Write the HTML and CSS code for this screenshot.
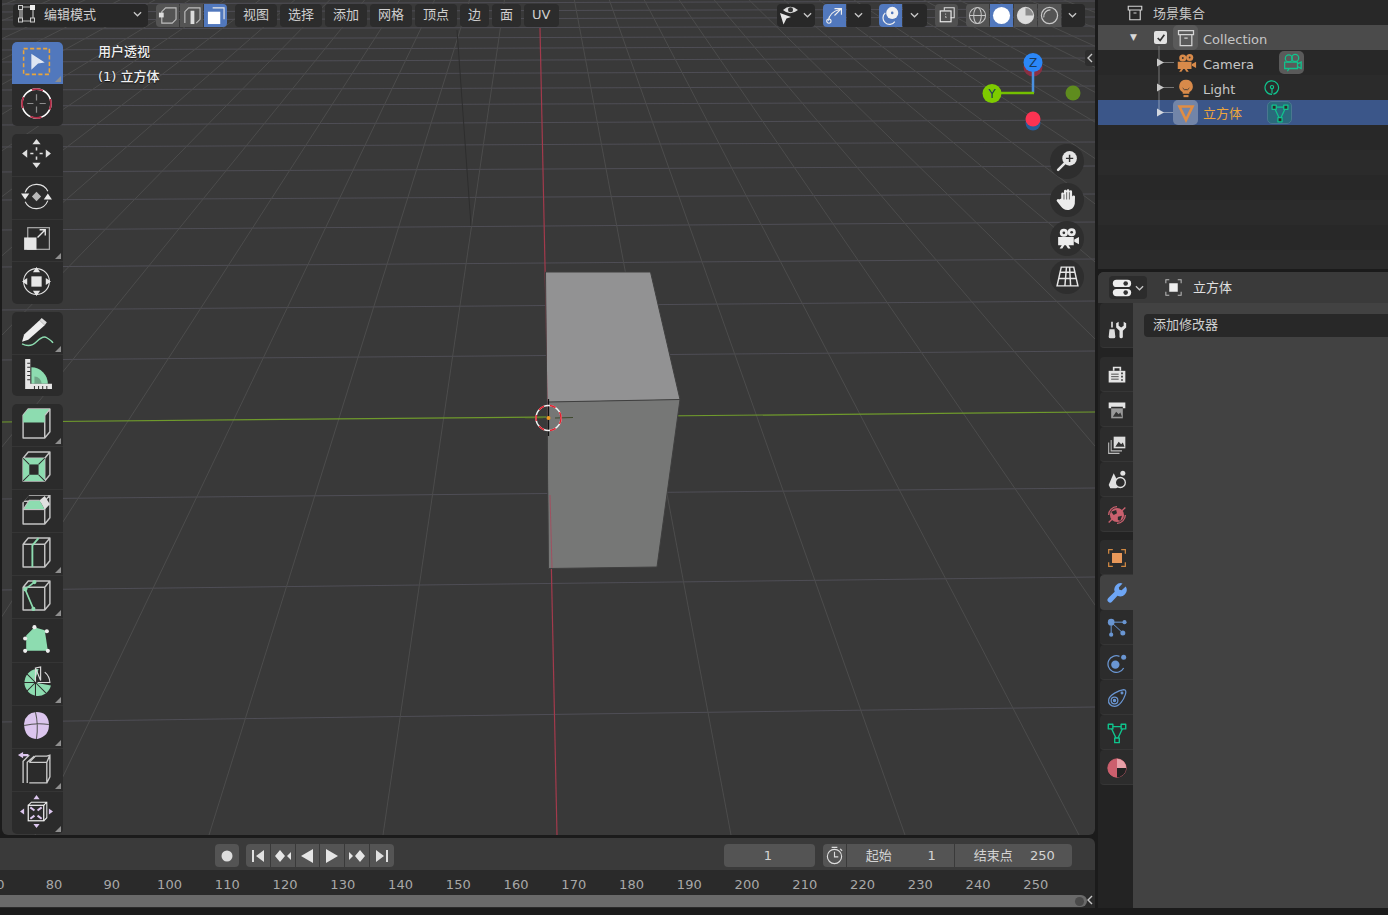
FILE: index.html
```html
<!DOCTYPE html>
<html lang="zh">
<head>
<meta charset="utf-8">
<title>Blender</title>
<link rel="stylesheet" href="styles.css">
</head>
<body>
<svg class="defs" width="0" height="0">
  <defs>
    <g id="cube" fill="none" stroke="#c4c4c4" stroke-width="1.400" stroke-linejoin="round">
      <path d="M3 8h21v22H3zM3 8l5-6h21v22l-5 6M24 8l5-6"/>
    </g>
    <g id="cam">
      <circle cx="8.500" cy="6.500" r="3.900"/><circle cx="16" cy="6" r="3.900"/>
      <path d="M3 10.500h15v8H13l2 3h-2.500l-2-3H9l-2 3H4.500l2-3H3zM18.500 13l4.500-2.500v7L18.500 15z"/>
    </g>
    <g id="boxicon" fill="none" stroke="currentColor" stroke-width="1.500">
      <path d="M3 3h18v5H3zM5 8v13h14V8M10 12h4"/>
    </g>
    <g id="tri-mesh" fill="none" stroke="#10c48d" stroke-width="1.500" stroke-linejoin="round">
      <path d="M5 5h14L12 20z"/>
      <rect x="2.500" y="2.500" width="5" height="5" fill="#2c2c2c"/><rect x="16.500" y="2.500" width="5" height="5" fill="#2c2c2c"/><rect x="9.500" y="17.500" width="5" height="5" fill="#2c2c2c"/>
    </g>
  </defs>
</svg>
<div class="app">
  <div class="left">
    <main class="viewport">
      <svg class="scene" viewBox="2 0 1093 835" width="1093" height="835">
        <path class="grid-h" d="M0 722L1095 707M0 590L1095 577M0 499L1095 488M0 360L1095 351M0 310L1095 301M0 267L1095 259M0 230L1095 222M0 200L1095 194M0 172L1095 166M0 147L1095 142M0 125L1095 120M0 106L1095 102M0 90L1095 86M0 75L1095 71M0 62L1095 58M0 50L1095 46M0 39L1095 36M0 29L1095 26M0 20L1095 17M0 12L1095 9M0 4L1095 1"/>
        <path class="grid-v" d="M535 -210L-2053 835M535 -210L-1879 835M535 -210L-1705 835M535 -210L-1531 835M535 -210L-1357 835M535 -210L-1183 835M535 -210L-1009 835M535 -210L-835 835M535 -210L-661 835M535 -210L-487 835M535 -210L-313 835M535 -210L-139 835M535 -210L35 835M535 -210L209 835M535 -210L383 835M535 -210L731 835M535 -210L905 835M535 -210L1079 835M535 -210L1253 835M535 -210L1427 835M535 -210L1601 835M535 -210L1775 835M535 -210L1949 835M535 -210L2123 835M535 -210L2297 835M535 -210L2471 835M535 -210L2645 835M535 -210L2819 835M535 -210L2993 835M535 -210L3167 835M535 -210L3341 835"/>
        <path class="grid-dark" d="M457 30L471 226"/>
        <path class="axis-y" d="M0 422L1095 412"/>
        <path class="axis-x" d="M540 28L557 835"/>
        <polygon class="cube-top" points="545.500,272 650.500,272 680,399.500 547.500,402"/>
        <polygon class="cube-front" points="547.500,402 680,399.500 657,567 548.500,568.500"/>
        <path class="cube-edge" d="M545.500 272H650.500L680 399.500L657 567L548.500 568.500L545.500 272M547.500 402L680 399.500"/>
        <path class="axis-x-faint" d="M550 495L552 568"/>
        <path class="axis-y-dark" d="M525 418.500H543M555 418L573 417.500"/>
        <path class="cursor-cross" d="M548.500 399V436"/>
        <circle class="cursor-w" cx="548.500" cy="418" r="12.500"/>
        <circle class="cursor-r" cx="548.500" cy="418" r="12.500"/>
        <circle class="cursor-dot" cx="548.500" cy="418" r="2"/>
        <circle cx="1033" cy="67" r="9.500" fill="#8a2f42"/>
        <path d="M1033 70V93" stroke="#4a90e0" stroke-width="2.500"/>
        <path d="M1000 93H1034" stroke="#74bf00" stroke-width="2.500"/>
        <circle cx="1033" cy="62.500" r="9.500" fill="#2b87f8"/>
        <circle cx="992" cy="93.500" r="9.500" fill="#7ecb00"/>
        <circle cx="1073" cy="93" r="7.500" fill="#5f8c1e"/>
        <circle cx="1033" cy="123" r="7.500" fill="#275d97"/>
        <circle cx="1033" cy="119" r="7.500" fill="#fc3352"/>
        <text class="axis-label" x="1033" y="67">Z</text>
        <text class="axis-label" x="992" y="98">Y</text>
      </svg>

      <header class="vp-head">
        <div class="mode-select">
          <svg class="ico20" viewBox="0 0 20 20"><path d="M5 3H16V17H5zM3 5V15" fill="none" stroke="#bbb" stroke-width="1.200"/><rect x="1.500" y="1.500" width="4" height="4" fill="#333" stroke="#ccc"/><rect x="13" y="1" width="5" height="5" fill="#eee"/><rect x="1.500" y="14" width="4" height="4" fill="#333" stroke="#ccc"/><rect x="13.500" y="14" width="4" height="4" fill="#333" stroke="#ccc"/></svg>
          <span class="mode-label">编辑模式</span>
          <svg class="chev" viewBox="0 0 10 6"><path d="M1 1l4 4 4-4"/></svg>
        </div>
        <div class="seg sel-modes">
          <button class="seg-btn"><svg class="ico20" viewBox="0 0 20 20"><path d="M4 6L8 2H19V14L15 18H4z" fill="none" stroke="#bdbdbd" stroke-width="1.200"/><rect x="1" y="7" width="5" height="5" fill="#ddd"/></svg></button>
          <button class="seg-btn"><svg class="ico20" viewBox="0 0 20 20"><path d="M3 18V6L7 2H19V14L15 18" fill="none" stroke="#bdbdbd" stroke-width="1.200"/><rect x="9" y="5" width="4" height="14" fill="#ddd"/></svg></button>
          <button class="seg-btn on"><svg class="ico20" viewBox="0 0 20 20"><path d="M7 2H19V14" fill="none" stroke="#e8e8e8" stroke-width="1.200"/><rect x="2" y="6" width="13" height="13" fill="#fff"/></svg></button>
        </div>
        <nav class="menus">
          <span class="menu">视图</span><span class="menu">选择</span><span class="menu">添加</span><span class="menu">网格</span><span class="menu">顶点</span><span class="menu">边</span><span class="menu">面</span><span class="menu">UV</span>
        </nav>
        <div class="head-right">
          <div class="dd eye">
            <svg class="ico22" viewBox="0 0 22 22"><path d="M5 6q7-6.500 15 0q-8 6.500-15 0z" fill="#ddd"/><circle cx="12.500" cy="5.800" r="2.500" fill="#333"/><path d="M2 9l11 4-4.500 1.500-3 6z" fill="#e6e6e6"/></svg>
            <svg class="chev" viewBox="0 0 10 6"><path d="M1 1l4 4 4-4"/></svg>
          </div>
          <div class="seg split">
            <button class="seg-btn on"><svg class="ico20" viewBox="0 0 22 22"><path d="M4 17Q5 7 17 4M11 3h8v7M19 3l-8 8" fill="none" stroke="#eee" stroke-width="1.300"/><circle cx="4.500" cy="17.500" r="2.500" fill="none" stroke="#eee" stroke-width="1.300"/></svg></button>
            <span class="dd-tail"><svg class="chev" viewBox="0 0 10 6"><path d="M1 1l4 4 4-4"/></svg></span>
          </div>
          <div class="seg split">
            <button class="seg-btn on"><svg class="ico20" viewBox="0 0 22 22"><circle cx="13" cy="8" r="7" fill="#f2f2f2"/><circle cx="13" cy="8" r="1.500" fill="#5178bd"/><path d="M5 8a7.500 7.500 0 1 0 11 10" fill="none" stroke="#eee" stroke-width="1.400"/></svg></button>
            <span class="dd-tail"><svg class="chev" viewBox="0 0 10 6"><path d="M1 1l4 4 4-4"/></svg></span>
          </div>
          <button class="solo"><svg class="ico20" viewBox="0 0 20 20"><path d="M7 5V2H18V13H14" fill="none" stroke="#ddd" stroke-width="1.200"/><rect x="2.500" y="5.500" width="12" height="12" fill="none" stroke="#eee" stroke-width="1.300"/><path d="M8 9h1M8 12h1v1" stroke="#eee" fill="none"/></svg></button>
          <div class="seg shading">
            <button class="seg-btn"><svg class="ico20" viewBox="0 0 20 20" fill="none" stroke="#c6c6c6" stroke-width="1.100"><circle cx="10" cy="10" r="8.500"/><ellipse cx="10" cy="10" rx="4" ry="8.500"/><path d="M1.500 10h17"/></svg></button>
            <button class="seg-btn on"><svg class="ico20" viewBox="0 0 20 20"><circle cx="10" cy="10" r="9" fill="#fff"/></svg></button>
            <button class="seg-btn"><svg class="ico20" viewBox="0 0 20 20"><circle cx="10" cy="10" r="8.500" fill="#8c8c8c" stroke="#d0d0d0" stroke-width="1.200"/><path d="M10 1.500A8.500 8.500 0 0 0 10 18.500A8.500 8.500 0 0 0 18.500 10H10z" fill="#dcdcdc"/></svg></button>
            <button class="seg-btn"><svg class="ico20" viewBox="0 0 20 20" fill="none" stroke="#c6c6c6" stroke-width="1.300"><circle cx="10" cy="10" r="8.500"/><path d="M4 12a7 7 0 0 1 7-8"/></svg></button>
            <span class="dd-tail"><svg class="chev" viewBox="0 0 10 6"><path d="M1 1l4 4 4-4"/></svg></span>
          </div>
        </div>
      </header>

      <div class="view-text">
        <div>用户透视</div>
        <div>(1) 立方体</div>
      </div>

      <aside class="toolbar">
        <div class="tool-group g1">
          <button class="tool active more"><svg class="ico30" viewBox="0 0 32 32"><rect x="3.500" y="3.500" width="25" height="25" fill="none" stroke="#e9a53c" stroke-width="1.500" stroke-dasharray="4 2.300"/><path d="M11 8.500L24 17l-6.500 1L11 24z" fill="#dfe6f2"/></svg></button>
          <button class="tool"><svg class="ico30" viewBox="0 0 32 32"><circle cx="16" cy="16" r="14" fill="none" stroke="#fff" stroke-width="1.600"/><circle cx="16" cy="16" r="14" fill="none" stroke="#b12a45" stroke-width="1.700" stroke-dasharray="11 11" stroke-dashoffset="5"/><path d="M16 7v6M16 19v6M7 16h6M19 16h6" stroke="#8d8d8d" stroke-width="1.200"/></svg></button>
        </div>
        <div class="tool-group g2">
          <button class="tool"><svg class="ico30" viewBox="0 0 32 32" fill="#e0e0e0"><path d="M16 2l4 5h-8zM16 30l-4-5h8zM2 16l5-4v8zM30 16l-5 4v-8z"/><path d="M16 10v3M16 19v3M10 16h3M19 16h3" stroke="#e0e0e0" stroke-width="1.500"/></svg></button>
          <button class="tool"><svg class="ico30" viewBox="0 0 32 32"><path d="M5 12a12 12 0 0 1 22-1M27 20a12 12 0 0 1-22 1" fill="none" stroke="#e0e0e0" stroke-width="1.100"/><path d="M1 13h8l-4 6zM23 19h8l-4-6z" fill="#e8e8e8"/><path d="M16 11.500l4.500 4.500-4.500 4.500-4.500-4.500z" fill="#b8b8b8"/></svg></button>
          <button class="tool more"><svg class="ico30" viewBox="0 0 32 32"><rect x="7.500" y="5.500" width="21" height="21" fill="none" stroke="#a8a8a8" stroke-width="1.200"/><rect x="4" y="15" width="12" height="12" fill="#e6e6e6"/><path d="M17 15l7-7M19 7.500h5.500V13" fill="none" stroke="#e6e6e6" stroke-width="1.300"/></svg></button>
          <button class="tool"><svg class="ico30" viewBox="0 0 32 32"><circle cx="16" cy="16" r="12.500" fill="none" stroke="#ddd" stroke-width="1.100"/><rect x="11" y="11" width="10" height="10" fill="#e6e6e6"/><path d="M16 2l3.500 5h-7zM16 30l-3.500-5h7zM2 16l5-3.500v7zM30 16l-5 3.500v-7z" fill="#e6e6e6"/></svg></button>
        </div>
        <div class="tool-group g3">
          <button class="tool more"><svg class="ico30" viewBox="0 0 32 32"><path d="M2 26l2-7L19 5l5 5L8 24z" fill="#eee"/><path d="M19 5l2-2 5 4-2 3z" fill="#ddd"/><path d="M2 28C8 31 12 30 16 26S23 20 26 22S31 25 32 27" fill="none" stroke="#8ddcb0" stroke-width="1.300"/></svg></button>
          <button class="tool"><svg class="ico30" viewBox="0 0 32 32"><path d="M11 26V10A16 16 0 0 1 27 26z" fill="#8ddcb0"/><path d="M14 26V19a7 7 0 0 1 7 7z" fill="#2b2b2b" opacity=".3"/><path d="M5 2h5v24h21v5H5z" fill="#e6e6e6"/><path d="M7 6h3M7 10h3M7 14h3M7 18h3M7 22h3M14 31v-3M18 31v-3M22 31v-3M26 31v-3" stroke="#333"/></svg></button>
        </div>
        <div class="tool-group g4">
          <button class="tool more"><svg class="ico30" viewBox="0 0 32 32"><use href="#cube"/><path d="M3 15V8L8 2H29L24 8V15z" fill="#8ddcb0"/><path d="M24 8l5-6" stroke="#c4c4c4"/></svg></button>
          <button class="tool"><svg class="ico30" viewBox="0 0 32 32"><use href="#cube"/><path d="M3 8h21v22H3z" fill="#8ddcb0"/><rect x="9" y="14" width="9" height="10" fill="#2b2b2b"/><path d="M3 8l6 6M24 8l-6 6M3 30l6-6M24 30l-6-6" stroke="#2b2b2b"/></svg></button>
          <button class="tool"><svg class="ico30" viewBox="0 0 32 32"><use href="#cube"/><path d="M3 16L9 7H19L24 16z" fill="#8ddcb0"/><path d="M19 7l5-4 5 8-5 5z" fill="#e0e0e0"/><path d="M3 16h21" stroke="#c4c4c4" stroke-width="1.200"/><path d="M2 0h28v2H9L3 9H2z" fill="#2b2b2b"/><path d="M3 16L9 7H19" fill="none" stroke="#c4c4c4"/></svg></button>
          <button class="tool more"><svg class="ico30" viewBox="0 0 32 32"><use href="#cube"/><path d="M12 30V9l6-7" fill="none" stroke="#8ddcb0" stroke-width="1.800"/></svg></button>
          <button class="tool more"><svg class="ico30" viewBox="0 0 32 32"><use href="#cube"/><path d="M14 3L5 10l8 19" fill="none" stroke="#8ddcb0" stroke-width="1.600"/><circle cx="14" cy="3" r="2" fill="#8ddcb0"/><circle cx="5" cy="10" r="2" fill="#8ddcb0"/><circle cx="13" cy="29" r="2" fill="#8ddcb0"/></svg></button>
          <button class="tool"><svg class="ico30" viewBox="0 0 32 32"><path d="M6 27V12L14 4l10 3 3 20z" fill="#8ddcb0"/><g fill="#eee"><circle cx="14" cy="4" r="2"/><circle cx="26" cy="8" r="2"/><circle cx="5" cy="15" r="2"/><circle cx="5" cy="27" r="2"/><circle cx="27" cy="27" r="2"/></g></svg></button>
          <button class="tool more"><svg class="ico30" viewBox="0 0 32 32"><path d="M14 16L18 3a13 13 0 1 0 12 16z" fill="#8ddcb0"/><path d="M15 16V2M15 2L20 1V14zM24 6a14 14 0 0 1 5 10l-12 0" fill="none" stroke="#ddd" stroke-width="1.100"/><path d="M15 16V30M15 16L5 6M15 16L2 16M15 16L5 26M15 16l10 10" stroke="#2b2b2b" stroke-width="1"/></svg></button>
          <button class="tool more"><svg class="ico30" viewBox="0 0 32 32"><path d="M4 14Q5 4 16 3q11 0 12 11 1 12-11 15Q4 29 4 14z" fill="#dcc6ee"/><path d="M4 16q12-3 24-1M15 3q3 12 1 26" fill="none" stroke="#555" stroke-width="1"/></svg></button>
          <button class="tool more"><svg class="ico30" viewBox="0 0 32 32"><path d="M7 30V10l7-6M3 30V9l6-6" fill="none" stroke="#ccc" stroke-width="1.300"/><path d="M9 10h17v20H9M9 10l6-6h11l3-1v21l-3 6M26 10l3-7" fill="none" stroke="#ccc" stroke-width="1.300"/><path d="M3 0v6l-5-3zM3 2h5v2H3z" fill="#dcc6ee"/></svg></button>
          <button class="tool more"><svg class="ico30" viewBox="0 0 32 32"><rect x="8" y="10" width="15" height="15" fill="none" stroke="#eee" stroke-width="1.200"/><path d="M8 10l3-3h15v15l-3 3M23 10l3-3" fill="none" stroke="#eee" stroke-width="1"/><path d="M16 0l3 4h-6zM16 32l-3-4h6zM0 16l4-3v6zM32 16l-4 3v-6z" fill="#dcc6ee"/><path d="M10 12l4 3M21 12l-4 3M10 23l4-3M21 23l-4-3" stroke="#dcc6ee" stroke-width="2"/></svg></button>
        </div>
      </aside>

      <span class="collapse-tab"><svg class="chev-l" viewBox="0 0 6 10"><path d="M5 1L1 5l4 4"/></svg></span>

      <div class="nav-gizmos">
        <button class="nav-btn"><svg class="ico24" viewBox="0 0 24 24"><circle cx="14" cy="9" r="7" fill="#e6e6e6"/><path d="M9 14L3 20" stroke="#e6e6e6" stroke-width="2.500" stroke-linecap="round"/><path d="M14 5.500v7M10.500 9h7" stroke="#333" stroke-width="1.400"/></svg></button>
        <button class="nav-btn"><svg class="ico24" viewBox="0 0 24 24"><path d="M6 11V6.500a1.300 1.300 0 0 1 2.600 0V4a1.300 1.300 0 0 1 2.600 0v-.5a1.300 1.300 0 0 1 2.600 0V4.500a1.300 1.300 0 0 1 2.600 0V8l.3 1a1.300 1.300 0 0 1 2.500.8L19 16c-1 4-3 6-7 6-3 0-4.500-1-6-3l-4-5a1.400 1.400 0 0 1 2-2z" fill="#ececec"/><path d="M8.600 7v5M11.200 5v7M13.800 5v7" stroke="#333" stroke-width=".700"/></svg></button>
        <button class="nav-btn"><svg class="ico24" viewBox="0 0 24 24" fill="#ececec"><use href="#cam"/><circle cx="8.500" cy="6.500" r="1.300" fill="#333"/><circle cx="16" cy="6" r="1.300" fill="#333"/></svg></button>
        <button class="nav-btn"><svg class="ico24" viewBox="0 0 24 24" fill="none" stroke="#e6e6e6" stroke-width="1.400"><path d="M6 3H18L22 21H2zM11 3L9.500 21M14 3L15 21M5 8H19.500M3.600 14H20.500"/></svg></button>
      </div>
    </main>

    <section class="timeline">
      <div class="tl-head">
        <button class="rec"><svg class="ico12" viewBox="0 0 12 12"><circle cx="6" cy="6" r="5.500" fill="#ddd"/></svg></button>
        <div class="seg transport">
          <button class="seg-btn"><svg class="ico16" viewBox="0 0 16 16"><path d="M2 2h2v12H2zM14 2v12L6 8z" fill="#e0e0e0"/></svg></button>
          <button class="seg-btn"><svg class="ico16" viewBox="0 0 16 16"><path d="M0 8l5-6 5 6-5 6zM17 3v10l-5-5z" fill="#e6e6e6"/></svg></button>
          <button class="seg-btn"><svg class="ico16" viewBox="0 0 16 16"><path d="M14 1v14L2 8z" fill="#e6e6e6"/></svg></button>
          <button class="seg-btn"><svg class="ico16" viewBox="0 0 16 16"><path d="M2 1v14l12-7z" fill="#e6e6e6"/></svg></button>
          <button class="seg-btn"><svg class="ico16" viewBox="0 0 16 16"><path d="M-1 3v10l5-5zM6 8l5-6 5 6-5 6z" fill="#e6e6e6"/></svg></button>
          <button class="seg-btn"><svg class="ico16" viewBox="0 0 16 16"><path d="M2 2v12l8-6zM12 2h2v12h-2z" fill="#e0e0e0"/></svg></button>
        </div>
        <div class="tl-fields">
          <span class="frame-now">1</span>
          <div class="seg range">
            <button class="seg-btn timer"><svg class="ico20" viewBox="0 0 20 20" fill="none" stroke="#ddd" stroke-width="1.200"><circle cx="10" cy="11" r="7.500"/><path d="M10 6v5.500h4M7 1.500h6M16 3l2 2"/></svg></button>
            <span class="field start"><span>起始</span><span>1</span></span>
            <span class="field end"><span>结束点</span><span>250</span></span>
          </div>
        </div>
      </div>
      <div class="ruler">
        <span>70</span><span>80</span><span>90</span><span>100</span><span>110</span><span>120</span><span>130</span><span>140</span><span>150</span><span>160</span><span>170</span><span>180</span><span>190</span><span>200</span><span>210</span><span>220</span><span>230</span><span>240</span><span>250</span>
      </div>
      <div class="scroll-row">
        <div class="scrollbar"><span class="thumb-dot"></span></div>
        <svg class="chev-l tl-arrow" viewBox="0 0 6 10"><path d="M5 1L1 5l4 4"/></svg>
      </div>
    </section>
  </div>

  <div class="right">
    <section class="outliner">
      <div class="row row-scene">
        <svg class="ico18 archive" viewBox="0 0 24 24"><use href="#boxicon"/></svg>
        <span>场景集合</span>
      </div>
      <div class="row row-coll">
        <span class="expander">▼</span>
        <span class="check"><svg viewBox="0 0 12 12" class="ico10"><path d="M2 6l3 3 5-7" fill="none" stroke="#333" stroke-width="2"/></svg></span>
        <span class="icon-box"><svg class="ico20 archive" viewBox="0 0 24 24"><use href="#boxicon"/></svg></span>
        <span class="name">Collection</span>
      </div>
      <div class="row row-obj">
        <svg class="twig" viewBox="0 0 20 25"><path d="M3 -4V25M3 12.500H18" stroke="#777" fill="none"/><path d="M1 8.500l7 4-7 4z" fill="#c8c8c8"/></svg>
        <span class="icon-plain"><svg class="ico22" viewBox="0 0 24 24" fill="#d88a4a"><use href="#cam"/><circle cx="8.500" cy="6.500" r="1" fill="#333"/><circle cx="16" cy="6" r="1" fill="#333"/></svg></span>
        <span class="name">Camera</span>
        <span class="chip chip-cam"><svg class="ico22" viewBox="0 0 24 24" fill="none" stroke="#10c48d" stroke-width="1.400"><circle cx="8.500" cy="7" r="3.800"/><circle cx="15.500" cy="6.500" r="3.800"/><path d="M4 11h14v7H4zM18 13l4-2v7l-4-2M9 18l-2 3"/></svg></span>
      </div>
      <div class="row row-obj alt">
        <svg class="twig" viewBox="0 0 20 25"><path d="M3 0V25M3 12.500H18" stroke="#777" fill="none"/><path d="M1 8.500l7 4-7 4z" fill="#c8c8c8"/></svg>
        <span class="icon-plain"><svg class="ico20" viewBox="0 0 24 24"><path d="M12 2a8 8 0 0 0-4 15v2h8v-2a8 8 0 0 0-4-15z" fill="#d88a4a"/><path d="M8 12l2 2h4l2-2" stroke="#333" fill="none"/><path d="M9 20.500h6V23H9z" fill="#d88a4a"/></svg></span>
        <span class="name">Light</span>
        <span class="chip chip-light"><svg class="ico18" viewBox="0 0 20 20" fill="none" stroke="#10c48d" stroke-width="1.300"><path d="M10 17a7.500 7.500 0 1 1 1.500-.2M10 11v5"/><circle cx="10" cy="9" r="1.800"/></svg></span>
      </div>
      <div class="row row-obj selected">
        <svg class="twig" viewBox="0 0 20 25"><path d="M3 0V13M3 12.500H18" stroke="#8a9ab5" fill="none"/><path d="M1 8.500l7 4-7 4z" fill="#d4d8e0"/></svg>
        <span class="icon-box sel-box"><svg class="ico20" viewBox="0 0 20 20" fill="none" stroke="#e08d43" stroke-width="2.600"><path d="M3.500 3.500h13L10 17z"/></svg></span>
        <span class="name sel-name">立方体</span>
        <span class="chip chip-mesh"><svg class="ico20 on-teal" viewBox="0 0 24 24"><use href="#tri-mesh"/></svg></span>
      </div>
      <div class="stripes"></div>
    </section>

    <section class="props">
      <header class="props-head">
        <div class="editor-type">
          <svg class="ico24" viewBox="0 0 24 24"><rect x="2" y="3" width="20" height="8" rx="4" fill="#eee"/><rect x="2" y="13" width="20" height="8" rx="4" fill="#eee"/><circle cx="16" cy="7" r="2.500" fill="#333"/><circle cx="16" cy="17" r="2.500" fill="#333"/></svg>
          <svg class="chev" viewBox="0 0 10 6"><path d="M1 1l4 4 4-4"/></svg>
        </div>
        <svg class="ico20 obj-ico" viewBox="0 0 20 20"><rect x="5" y="5" width="10" height="10" fill="#eee"/><path d="M1 5V1h4M15 1h4v4M19 15v4h-4M5 19H1v-4" fill="none" stroke="#bbb" stroke-width="1.200"/></svg>
        <span>立方体</span>
      </header>
      <div class="props-body">
        <nav class="tabs">
          <div class="tab-group first">
            <span class="tab tall"><svg class="ico20" viewBox="0 0 24 24"><path d="M6 2v7" stroke="#ddd" stroke-width="2"/><path d="M3 11h6l1 9a2 2 0 0 1-2 2H4a2 2 0 0 1-2-2z" fill="#ddd"/><path d="M14 2v5l3 2 3-2V2l3 2v5l-4 4v7a2 2 0 0 1-4 0v-7l-4-4V4z" fill="#e4e4e4"/></svg></span>
          </div>
          <div class="tab-group">
            <span class="tab"><svg class="ico20" viewBox="0 0 24 24"><rect x="2" y="7" width="20" height="14" fill="#e4e4e4"/><path d="M8 7V3h8v4" fill="none" stroke="#e4e4e4" stroke-width="2"/><path d="M5 11h9M5 14h9M5 17h9" stroke="#333"/><path d="M17 10h2M17 14h2M17 18h2" stroke="#333" stroke-width="2"/></svg></span>
            <span class="tab"><svg class="ico20" viewBox="0 0 24 24"><path d="M2 3h20v7H19V8H5v2H2z" fill="#e4e4e4"/><rect x="5" y="10" width="14" height="12" fill="#999"/><path d="M7 20l4-6 3 3 2-2 2 5z" fill="#333"/></svg></span>
            <span class="tab"><svg class="ico20" viewBox="0 0 24 24"><rect x="8" y="2" width="14" height="14" fill="#ddd"/><path d="M10 14l4-6 3 3 2-2 2 5z" fill="#333"/><path d="M5 6v13h13M2 9v13h13" fill="none" stroke="#bbb" stroke-width="1.300"/></svg></span>
            <span class="tab"><svg class="ico20" viewBox="0 0 24 24"><path d="M8 4l6 12a5 5 0 0 1-3 6H4l-2-4z" fill="#e0e0e0"/><circle cx="19" cy="4" r="3" fill="#e0e0e0"/><circle cx="16" cy="15" r="6" fill="#2b2b2b" stroke="#e0e0e0" stroke-width="1.600"/></svg></span>
            <span class="tab"><svg class="ico20" viewBox="0 0 24 24"><circle cx="12" cy="12" r="8.500" fill="#c9606e"/><path d="M2 21L6 17M22 3L18 7M22 12a10 10 0 0 1-10 10M2 12A10 10 0 0 1 12 2" fill="none" stroke="#c9606e" stroke-width="1.600"/><path d="M5 8l6-2 1 4-4 2zM13 14l5-1-2 6-3-1z" fill="#2b2b2b"/></svg></span>
          </div>
          <div class="tab-group">
            <span class="tab"><svg class="ico20" viewBox="0 0 24 24"><rect x="6" y="6" width="12" height="12" fill="#e8985a"/><path d="M2 7V2h5M17 2h5v5M22 17v5h-5M7 22H2v-5" fill="none" stroke="#cf8742" stroke-width="1.500"/></svg></span>
            <span class="tab current"><svg class="ico22" viewBox="0 0 24 24"><path d="M21.500 5l-4.500 4-2.500-.5-.5-2.500 4-4.500a7 7 0 0 0-8.500 9.200L2.500 17.500a2.800 2.800 0 0 0 4 4l6-6.500A7 7 0 0 0 21.500 5z" fill="#6ea6f5"/></svg></span>
            <span class="tab"><svg class="ico20" viewBox="0 0 24 24" fill="#6a96d2"><circle cx="5" cy="5" r="4"/><circle cx="21" cy="5" r="2.500"/><circle cx="5" cy="20" r="2.500"/><circle cx="19" cy="18" r="3"/><path d="M5 5h16M5 5v15M5 5l14 13" stroke="#6a96d2" stroke-width="1.200"/></svg></span>
            <span class="tab"><svg class="ico20" viewBox="0 0 24 24"><circle cx="10" cy="14" r="5" fill="#6a96d2"/><circle cx="20" cy="5" r="3" fill="#6a96d2"/><path d="M15 4a10 10 0 1 0 5 14" fill="none" stroke="#6a96d2" stroke-width="1.500"/></svg></span>
            <span class="tab"><svg class="ico20" viewBox="0 0 24 24" fill="none" stroke="#6a96d2" stroke-width="1.500"><path d="M2 14C3 8 14 3 20 2c3 0 3 3 2 6-2 6-7 14-13 14-4 0-8-3-7-8z"/><circle cx="9" cy="15" r="4"/><circle cx="9" cy="15" r="1.300" fill="#6a96d2"/><circle cx="18" cy="6" r="1"/></svg></span>
            <span class="tab"><svg class="ico22" viewBox="0 0 24 24"><use href="#tri-mesh"/></svg></span>
            <span class="tab"><svg class="ico22" viewBox="0 0 24 24"><circle cx="12" cy="12" r="10" fill="#cc5f6d" stroke="#cc5f6d"/><path d="M12 12H22A10 10 0 0 1 12 22z" fill="#222"/><path d="M12 12H2A10 10 0 0 0 12 22z" fill="#cc5f6d"/><path d="M12 2A10 10 0 0 1 22 12H12z" fill="#e8a0a8"/></svg></span>
          </div>
        </nav>
        <div class="props-main">
          <button class="add-mod">添加修改器</button>
        </div>
      </div>
    </section>
  </div>
</div>
</body>
</html>
```
FILE: styles.css
```css
* { box-sizing: border-box; }
html, body { margin: 0; height: 100%; overflow: hidden; }
body {
  background: #1b1b1b;
  color: #d4d4d4;
  font: 13px/1 "DejaVu Sans", "Noto Sans CJK SC", sans-serif;
}
button { font: inherit; color: inherit; border: 0; padding: 0; background: none; }
svg { display: block; flex: none; }
.defs { position: absolute; }
.ico10 { width: 10px; height: 10px; }
.ico12 { width: 12px; height: 12px; }
.ico16 { width: 16px; height: 16px; }
.ico18 { width: 18px; height: 18px; }
.ico20 { width: 20px; height: 20px; }
.ico22 { width: 22px; height: 22px; }
.ico24 { width: 24px; height: 24px; }
.ico30 { width: 33px; height: 33px; margin: 0 3px 3px 0; overflow: visible; }
.chev { width: 9px; height: 6px; fill: none; stroke: #c8c8c8; stroke-width: 1.400; }
.chev-l { width: 6px; height: 10px; fill: none; stroke: #c8c8c8; stroke-width: 1.400; }

.app { display: flex; width: 1388px; height: 915px; }
.left { width: 1095px; display: flex; flex-direction: column; }
.right { width: 290px; margin-left: 3px; display: flex; flex-direction: column; }

/* viewport */
.viewport {
  position: relative;
  height: 835px;
  margin-left: 2px;
  background: #393939;
  border-radius: 0 0 6px 6px;
  overflow: hidden;
}
.scene { position: absolute; left: 0; top: 0; }
.grid-h { stroke: #4f4e56; stroke-width: 1; fill: none; }
.grid-v { stroke: #4c4c4c; stroke-width: 1; fill: none; }
.grid-dark { stroke: #2e2e2e; stroke-width: 1; fill: none; }
.axis-y { stroke: #6f9a2c; stroke-width: 1.200; fill: none; }
.axis-x { stroke: #a33a4c; stroke-width: 1.200; fill: none; }
.axis-x-faint { stroke: #a05060; stroke-width: 1; fill: none; }
.axis-y-dark { stroke: #3f4a2e; stroke-width: 1.200; fill: none; }
.cube-top { fill: #929293; }
.cube-front { fill: #767776; }
.cube-edge { fill: none; stroke: #3f3f3f; stroke-width: 1; }
.cursor-cross { stroke: #111; stroke-width: 1.200; }
.cursor-w { fill: none; stroke: #f4f4f4; stroke-width: 1.500; }
.cursor-r { fill: none; stroke: #e3202e; stroke-width: 1.500; stroke-dasharray: 6 6; }
.cursor-dot { fill: #f09a20; }
.axis-label { font-size: 12px; fill: #173a5c; text-anchor: middle; }

.vp-head {
  position: relative;
  display: flex;
  align-items: center;
  height: 24px;
  margin-top: 3px;
  padding: 0 10px 0 11px;
  gap: 8px;
  color: #cfcfcf;
}
.mode-select {
  display: flex;
  align-items: center;
  width: 135px;
  height: 23px;
  padding: 0 6px 2px 4px;
  background: #282828;
  border-radius: 4px;
}
.mode-label { margin-left: 7px; flex: 1; }
.seg { display: flex; height: 23px; border-radius: 4px; overflow: hidden; gap: 1px; }
.seg-btn {
  display: flex;
  align-items: center;
  justify-content: center;
  width: 23px;
  background: #545454;
}
.seg-btn.on { background: #5178bd; }
.seg-btn .ico20 { width: 19px; height: 19px; }
.menus { display: flex; gap: 3px; }
.menu {
  height: 23px;
  padding: 0 8px;
  line-height: 21px;
  background: #2c2c2c;
  border-radius: 4px;
}
.head-right { margin-left: auto; display: flex; align-items: center; gap: 8px; }
.dd {
  display: flex;
  align-items: center;
  justify-content: space-between;
  width: 38px;
  height: 23px;
  padding: 0 3px 0 1px;
  background: #282828;
  border-radius: 4px;
}
.dd .ico22 { width: 22px; height: 22px; }
.dd-tail {
  display: flex;
  align-items: center;
  justify-content: center;
  width: 24px;
  background: #282828;
}
.shading .dd-tail { width: 23px; padding-right: 2px; }
.split .dd-tail { padding-right: 2px; }
.solo {
  display: flex;
  align-items: center;
  justify-content: center;
  width: 23px;
  height: 23px;
  background: #505050;
  border-radius: 4px;
}
.solo .ico20 { width: 18px; height: 18px; }

.view-text {
  position: absolute;
  left: 96px;
  top: 45px;
  display: flex;
  flex-direction: column;
  gap: 12px;
  color: #f0f0f0;
  font-size: 13px;
  font-weight: 500;
  text-shadow: 0 1px 1px #111;
}

.toolbar {
  position: absolute;
  left: 10px;
  top: 42px;
  width: 51px;
  display: flex;
  flex-direction: column;
  gap: 8px;
}
.tool-group {
  display: flex;
  flex-direction: column;
  background: #2b2b2b;
  border-radius: 5px;
  overflow: hidden;
}
.g1, .g3 { height: 84px; }
.g2 { height: 170px; }
.g4 { height: 430px; }
.tool {
  position: relative;
  flex: 1;
  display: flex;
  align-items: center;
  justify-content: center;
  border-bottom: 1px solid #353535;
}
.tool:last-child { border-bottom: 0; }
.tool.active { background: #5178bd; border-bottom: 0; }
.tool.more::after {
  content: "";
  position: absolute;
  right: 2px;
  bottom: 2px;
  border-style: solid;
  border-width: 0 0 6px 6px;
  border-color: transparent transparent #8f8f8f transparent;
}
.collapse-tab {
  position: absolute;
  right: 0;
  top: 50px;
  width: 10px;
  height: 16px;
  display: flex;
  align-items: center;
  justify-content: center;
  background: #2e2e2e;
  border-radius: 3px 0 0 3px;
}
.nav-gizmos {
  position: absolute;
  left: 1048px;
  top: 144px;
  display: flex;
  flex-direction: column;
  gap: 4px;
}
.nav-btn {
  display: flex;
  align-items: center;
  justify-content: center;
  width: 34px;
  height: 34.500px;
  background: #2e2e2e;
  border-radius: 50%;
}
.nav-btn .ico24 { width: 25px; height: 25px; }

/* timeline */
.timeline {
  margin-top: 3px;
  height: 70px;
  display: flex;
  flex-direction: column;
  background: #3a3a3a;
  border-radius: 0 6px 0 0;
  overflow: hidden;
}
.tl-head {
  display: flex;
  align-items: center;
  height: 32px;
  padding-left: 215px;
  padding-top: 3px;
}
.rec {
  display: flex;
  align-items: center;
  justify-content: center;
  width: 24px;
  height: 23px;
  background: #545454;
  border-radius: 4px;
}
.transport { margin-left: 7px; }
.transport .seg-btn { width: 23.800px; }
.tl-fields { margin-left: 330px; display: flex; gap: 8px; }
.frame-now {
  width: 91px;
  height: 23px;
  padding-right: 3px;
  line-height: 23px;
  text-align: center;
  background: #545454;
  border-radius: 4px;
}
.range { background: #3a3a3a; }
.timer { width: 23px; }
.field {
  display: flex;
  justify-content: space-between;
  align-items: center;
  background: #545454;
}
.start { width: 107px; padding: 0 18px 0 19px; }
.end { width: 117px; padding: 0 17px 0 19px; }
.ruler {
  display: flex;
  height: 25px;
  margin-left: -32.600px;
  align-items: center;
  background: #2a2a2a;
  color: #a8a8a8;
  padding-top: 4px;
}
.ruler span { flex: 0 0 57.760px; text-align: center; }
.scroll-row {
  position: relative;
  height: 13px;
  padding-right: 8px;
  background: #2a2a2a;
}
.scrollbar {
  position: relative;
  height: 12px;
  background: #6a6a6a;
  border-radius: 0 6px 6px 0;
}
.thumb-dot {
  position: absolute;
  right: 3px;
  top: 2px;
  width: 9px;
  height: 9px;
  background: #4a4a4a;
  border-radius: 50%;
}
.tl-arrow { position: absolute; right: 2px; top: 0; }

/* outliner */
.outliner {
  height: 269px;
  display: flex;
  flex-direction: column;
  background: #282828;
  overflow: hidden;
  color: #c6c6c6;
}
.row {
  position: relative;
  flex: none;
  display: flex;
  align-items: center;
  height: 25px;
  background: #282828;
}
.row.alt { background: #2b2b2b; }
.row-scene { padding-left: 28px; }
.row-scene span { margin-left: 9px; padding-top: 2px; }
.archive { color: #d4d4d4; }
.row-coll { background: #4b4b4b; padding-left: 32px; }
.expander { width: 24px; font-size: 9px; color: #d8d8d8; }
.check {
  display: flex;
  align-items: center;
  justify-content: center;
  width: 13px;
  height: 13px;
  background: #e2e2e2;
  border-radius: 2px;
}
.icon-box {
  display: flex;
  align-items: center;
  justify-content: center;
  width: 25px;
  height: 25px;
  margin-left: 6px;
  background: #5a5a5a;
  border-radius: 5px;
}
.name { margin-left: 5px; padding-top: 4px; }
.row-obj { padding-left: 57px; }
.twig { width: 20px; height: 25px; overflow: visible; margin-left: 1px; }
.icon-plain {
  display: flex;
  align-items: center;
  justify-content: center;
  width: 25px;
  height: 25px;
  margin-left: -3px;
}
.row-obj .name { margin-left: 5px; }
.chip {
  display: flex;
  align-items: center;
  justify-content: center;
  width: 25px;
  height: 23px;
  border-radius: 5px;
}
.chip-cam { margin-left: 25px; background: #5a5a5a; }
.chip-light { margin-left: 24px; }
.chip-mesh { margin-left: 25px; background: #2a6a7c; border: 1px solid #4a7890; }
.selected { background: #3b5689; }
.sel-box { margin-left: -3px; background: #7285a8; }
.sel-name { color: #eca53c; padding-top: 2px; }
.row-obj .sel-name { padding-top: 2px; }
.stripes {
  flex: 1;
  background: repeating-linear-gradient(#282828 0 25px, #2b2b2b 25px 50px);
}

/* properties */
.props {
  margin-top: 3px;
  height: 636px;
  display: flex;
  flex-direction: column;
  border-radius: 6px 0 0 0;
  overflow: hidden;
  background: #424242;
}
.props-head {
  display: flex;
  align-items: center;
  height: 31px;
  padding-left: 11px;
  background: #3a3a3a;
  color: #e0e0e0;
}
.editor-type {
  display: flex;
  align-items: center;
  gap: 2px;
  width: 38px;
  height: 23px;
  padding-left: 2px;
  background: #2c2c2c;
  border-radius: 4px;
}
.editor-type .ico24 { width: 22px; height: 22px; }
.obj-ico { width: 17px; height: 17px; margin: 0 11px 0 18px; }
.props-body { flex: 1; display: flex; min-height: 0; }
.tabs {
  width: 35px;
  padding: 0 0 0 2px;
  display: flex;
  flex-direction: column;
  gap: 8px;
  background: #232323;
}
.tab-group { display: flex; flex-direction: column; }
.tab-group.first { margin-bottom: 1px; }
.tab {
  display: flex;
  align-items: center;
  justify-content: center;
  height: 35px;
  padding-top: 1px;
  background: #2c2c2c;
  border-bottom: 1px solid #363636;
  border-radius: 4px 0 0 4px;
}
.tab.tall { height: 45px; padding-top: 10px; }
.tab.current { background: #424242; border-bottom: 0; }
.props-main { flex: 1; padding: 11px 0 0 11px; }
.add-mod {
  display: block;
  width: 100%;
  height: 23px;
  padding: 0 0 2px 9px;
  text-align: left;
  background: #282828;
  border-radius: 4px 0 0 4px;
  color: #d0d0d0;
}
```
